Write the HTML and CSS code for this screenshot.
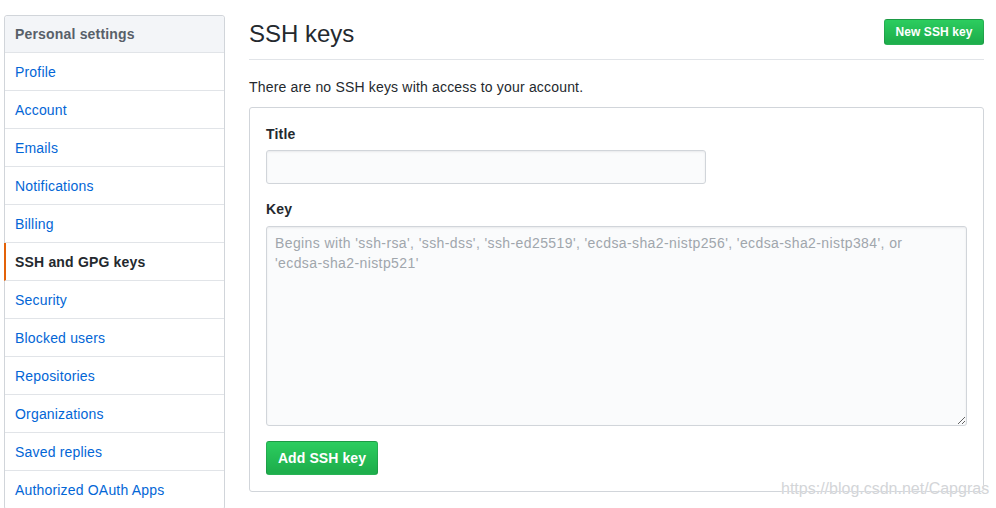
FILE: index.html
```html
<!DOCTYPE html>
<html lang="en">
<head>
<meta charset="utf-8">
<title>SSH keys</title>
<link rel="stylesheet" href="styles.css">
</head>
<body>
<div class="layout">
  <nav class="menu">
    <div class="menu-heading">Personal settings</div>
    <a class="menu-item" href="#">Profile</a>
    <a class="menu-item" href="#">Account</a>
    <a class="menu-item" href="#">Emails</a>
    <a class="menu-item" href="#">Notifications</a>
    <a class="menu-item" href="#">Billing</a>
    <a class="menu-item selected" href="#">SSH and GPG keys</a>
    <a class="menu-item" href="#">Security</a>
    <a class="menu-item" href="#">Blocked users</a>
    <a class="menu-item" href="#">Repositories</a>
    <a class="menu-item" href="#">Organizations</a>
    <a class="menu-item" href="#">Saved replies</a>
    <a class="menu-item" href="#">Authorized OAuth Apps</a>
  </nav>
  <main class="main">
    <div class="subhead">
      <h2 class="subhead-title">SSH keys</h2>
      <button class="btn btn-sm" type="button">New SSH key</button>
    </div>
    <p class="blank">There are no SSH keys with access to your account.</p>
    <form class="box">
      <div class="form-group">
        <label class="label">Title</label>
        <input class="input" type="text">
      </div>
      <div class="form-group">
        <label class="label">Key</label>
        <textarea class="textarea" placeholder="Begins with 'ssh-rsa', 'ssh-dss', 'ssh-ed25519', 'ecdsa-sha2-nistp256', 'ecdsa-sha2-nistp384', or&#10;'ecdsa-sha2-nistp521'"></textarea>
      </div>
      <button class="btn btn-md" type="button">Add SSH key</button>
    </form>
  </main>
</div>
<div class="watermark">https://blog.csdn.net/Capgras</div>
</body>
</html>
```
FILE: styles.css
```css
* { box-sizing: border-box; }
html, body { margin: 0; padding: 0; }
body {
  font-family: "Liberation Sans", Arial, Helvetica, sans-serif;
  font-size: 14px;
  line-height: 1.5;
  letter-spacing: 0.18px;
  color: #24292e;
  background: #fff;
  overflow: hidden;
  height: 508px;
}
.layout {
  display: flex;
  align-items: flex-start;
  padding: 15px 12px 0 4px;
  gap: 24px;
}
.menu {
  width: 221px;
  flex: none;
  border: 1px solid #d1d5da;
  border-radius: 3px;
  display: flex;
  flex-direction: column;
  background: #fff;
}
.menu-heading {
  padding: 8px 10px;
  line-height: 20px;
  font-weight: bold;
  color: #586069;
  background: #f3f5f8;
  border-bottom: 1px solid #e1e4e8;
  border-radius: 3px 3px 0 0;
}
.menu-item {
  display: block;
  padding: 9px 10px 7px;
  line-height: 21px;
  color: #0366d6;
  text-decoration: none;
  border-bottom: 1px solid #e1e4e8;
}
.menu-item.selected {
  color: #24292e;
  font-weight: bold;
  border-left: 2px solid #e36209;
  margin-left: -1px;
  padding-left: 9px;
}
.main {
  flex: 1;
  min-width: 0;
  padding-top: 1px;
}
.subhead {
  display: flex;
  align-items: flex-start;
  justify-content: space-between;
  padding-bottom: 8px;
  border-bottom: 1px solid #e1e4e8;
  margin-bottom: 17px;
}
.subhead-title {
  margin: 0;
  font-size: 24px;
  font-weight: normal;
  line-height: 35px;
  letter-spacing: 0;
}
.btn {
  font-family: inherit;
  font-weight: bold;
  color: #fff;
  white-space: nowrap;
  letter-spacing: 0.1px;
  background-image: linear-gradient(-180deg, #2ccd5f 0%, #1eaf4c 90%);
  background-color: #1eaf4c;
  border: 1px solid rgba(27,31,35,0.15);
  border-radius: 3px;
  cursor: pointer;
}
.btn-sm {
  font-size: 12px;
  line-height: 20px;
  padding: 2px 0;
  margin-top: 3px;
  width: 100px;
}
.btn-md {
  font-size: 14px;
  line-height: 20px;
  padding: 6px 0;
  width: 112px;
}
.blank {
  margin: 0 0 9px;
  line-height: 21px;
}
.box {
  border: 1px solid #d1d5da;
  border-radius: 3px;
  padding: 16px;
  margin: 0;
}
.form-group {
  margin-bottom: 15px;
}
.label {
  display: block;
  font-weight: bold;
  line-height: 21px;
  margin-bottom: 5px;
}
.form-group + .form-group .label { margin-bottom: 6px; }
.input, .textarea {
  display: block;
  font-family: inherit;
  font-size: 14px;
  line-height: 20px;
  letter-spacing: 0.4px;
  color: #24292e;
  background-color: #fafbfc;
  border: 1px solid #d1d5da;
  border-radius: 3px;
  box-shadow: inset 0 1px 2px rgba(27,31,35,0.075);
  padding: 6px 8px;
  outline: none;
}
.input {
  width: 440px;
  height: 34px;
}
.textarea {
  width: 100%;
  height: 200px;
  resize: vertical;
  margin: 0;
}
.textarea::placeholder { color: #a0a6ac; }
.watermark {
  position: absolute;
  left: 781px;
  top: 478px;
  font-size: 16px;
  line-height: 22px;
  letter-spacing: 0;
  color: #d3d5d8;
  text-shadow: 0 0 1px #fff;
  white-space: nowrap;
}
```
